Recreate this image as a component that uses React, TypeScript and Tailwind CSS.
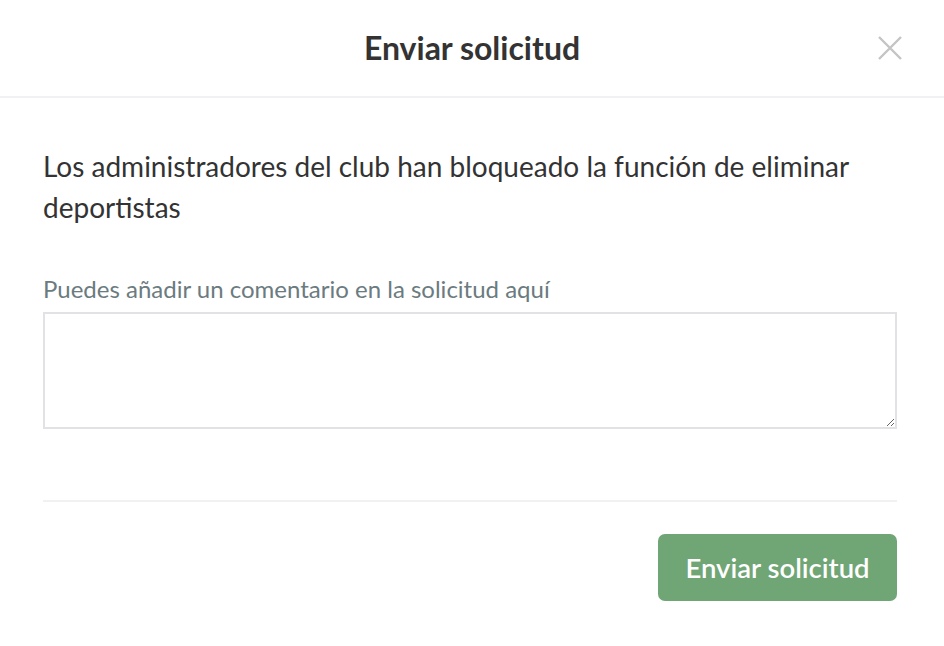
export default function App() {
  return (
    <div className="w-[944px] h-[646px] bg-white font-['Lato',sans-serif] text-[#333]">
      <div className="relative h-[98px] flex items-center justify-center border-b-2 border-[#f1f1f4]">
        <h1 className="text-[32px] font-bold text-[#333] leading-none">Enviar solicitud</h1>
        <button className="absolute right-[40px] top-[34px] w-[28px] h-[28px] flex items-center justify-center">
          <svg width="26" height="26" viewBox="0 0 26 26" fill="none" stroke="#c4c4c4" strokeWidth="2.4">
            <path d="M2 2 L24 24 M24 2 L2 24" />
          </svg>
        </button>
      </div>
      <div className="pl-[43px] pr-[47px] pt-[48px]">
        <p className="text-[28px] leading-[41px] text-[#333]">
          Los administradores del club han bloqueado la función de eliminar deportistas
        </p>
        <label className="block mt-[47px] text-[24px] leading-[28px] text-[#6b7b80]">
          Puedes añadir un comentario en la solicitud aquí
        </label>
        <textarea className="block mt-[9px] w-full h-[117px] border-2 border-[#e2e2e6] outline-none resize-y" />
        <div className="mt-[71px] border-t-2 border-[#f1f1f4]" />
        <div className="flex justify-end mt-[32px]">
          <button className="w-[239px] h-[67px] rounded-[7px] bg-[#70a575] text-white text-[27.5px] font-semibold">
            Enviar solicitud
          </button>
        </div>
      </div>
    </div>
  );
}
